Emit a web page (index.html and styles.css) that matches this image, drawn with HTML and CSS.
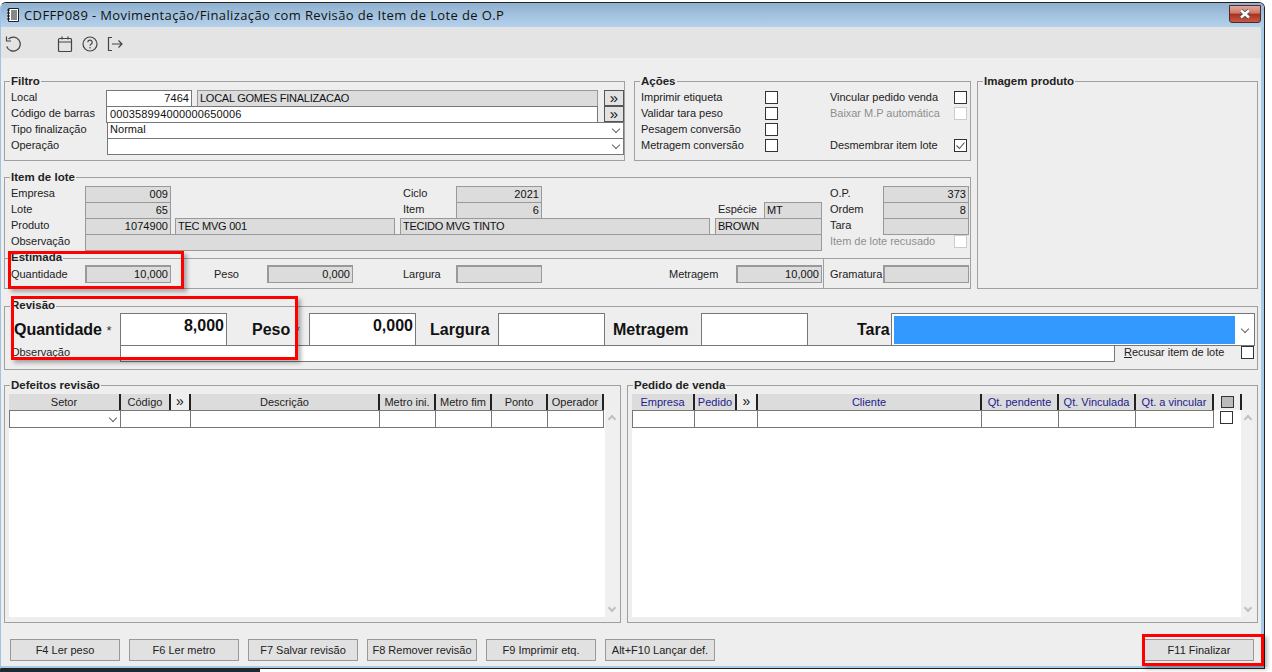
FILE: index.html
```html
<!DOCTYPE html>
<html lang="pt">
<head>
<meta charset="utf-8">
<title>CDFFP089</title>
<link rel="stylesheet" href="styles.css">
</head>
<body>
<div class="window">
  <header class="titlebar">
    <svg class="appicon" width="16" height="16" viewBox="0 0 16 16"><path d="M3.500 1.500h10v13h-10z" fill="#fff" stroke="#222"/><path d="M2 3h3M2 6h3M2 9h3M2 12h3" stroke="#111"/><path d="M6 4h6M6 6h6M6 8h6M6 10h6M6 12h6" stroke="#111"/></svg>
    <span class="titletext">CDFFP089 - Movimentação/Finalização com Revisão de Item de Lote de O.P</span>
    <span class="close"><svg width="14" height="10" viewBox="0 0 14 10"><path d="M3 1.500l8 7M11 1.500l-8 7" stroke="#45505a" stroke-width="4"/><path d="M3 1.500l8 7M11 1.500l-8 7" stroke="#fff" stroke-width="2.400"/></svg></span>
  </header>
  <nav class="toolbar">
    <svg class="tool" width="20" height="20" viewBox="0 0 20 20" fill="none" stroke="#444" stroke-width="1.200"><path d="M5.500 5a7 7 0 1 1-1.800 7.500"/><path d="M3.500 2.500v4.500h4.500"/></svg>
    <svg class="tool first" width="18" height="18" viewBox="0 0 18 18" fill="none" stroke="#444" stroke-width="1.200"><rect x="2.500" y="3.500" width="13" height="13" rx="1"/><path d="M2.500 7h13M6 1.500v3M12 1.500v3"/></svg>
    <svg class="tool" width="18" height="18" viewBox="0 0 18 18" fill="none" stroke="#444" stroke-width="1.200"><circle cx="9" cy="9" r="7"/><path d="M6.800 7.200a2.200 2.200 0 1 1 3.200 2c-.7.4-1 .8-1 1.600"/><path d="M9 12v1.500"/></svg>
    <svg class="tool" width="18" height="18" viewBox="0 0 18 18" fill="none" stroke="#444" stroke-width="1.200"><path d="M6 2.500H2.500v13H6M6 9h10M12.500 5.500L16 9l-3.500 3.500"/></svg>
  </nav>
  <main class="content">
    <div class="upper">
      <div class="upper-left">
        <div class="upper-row">
          <section class="panel filtro">
            <h2 class="legend">Filtro</h2>
            <div class="row"><label class="lab w95">Local</label><span class="f w86 num">7464</span><span class="f ro w401 ml5">LOCAL GOMES FINALIZACAO</span><span class="btn-more ml6">»</span></div>
            <div class="row"><label class="lab w95">Código de barras</label><span class="f w491 digits">000358994000000650006</span><span class="btn-more ml6">»</span></div>
            <div class="row"><label class="lab w96">Tipo finalização</label><span class="f combo w517">Normal<i class="chev"></i></span></div>
            <div class="row"><label class="lab w96">Operação</label><span class="f combo w517"><i class="chev"></i></span></div>
          </section>
          <section class="panel acoes">
            <h2 class="legend">Ações</h2>
            <div class="check-grid">
              <div class="row"><label class="lab w124">Imprimir etiqueta</label><span class="cb"></span><label class="lab w124 ml52">Vincular pedido venda</label><span class="cb"></span></div>
              <div class="row"><label class="lab w124">Validar tara peso</label><span class="cb"></span><label class="lab w124 ml52 dis">Baixar M.P automática</label><span class="cb off"></span></div>
              <div class="row"><label class="lab w124">Pesagem conversão</label><span class="cb"></span></div>
              <div class="row"><label class="lab w124">Metragem conversão</label><span class="cb"></span><label class="lab w124 ml52">Desmembrar item lote</label><span class="cb"><svg width="13" height="13" viewBox="0 0 13 13" fill="none" stroke="#555" stroke-width="1.100"><path d="M2.500 6.500l3 3 5-6"/></svg></span></div>
            </div>
          </section>
        </div>
        <section class="panel item">
          <h2 class="legend">Item de lote</h2>
          <div class="row"><label class="lab w74">Empresa</label><span class="f ro w86 num">009</span><label class="lab w53 ml232">Ciclo</label><span class="f ro w86 num">2021</span><label class="lab w53 ml288">O.P.</label><span class="f ro w86 num">373</span></div>
          <div class="row"><label class="lab w74">Lote</label><span class="f ro w86 num">65</span><label class="lab w53 ml232">Item</label><span class="f ro w86 num">6</span><label class="lab w46 ml176">Espécie</label><span class="f ro w58">MT</span><label class="lab w53 ml8">Ordem</label><span class="f ro w86 num">8</span></div>
          <div class="row"><label class="lab w74">Produto</label><span class="f ro w86 num">1074900</span><span class="f ro w220 ml4">TEC MVG 001</span><span class="f ro w310 ml5">TECIDO MVG TINTO</span><span class="f ro w107 ml5">BROWN</span><label class="lab w53 ml8">Tara</label><span class="f ro w86"></span></div>
          <div class="row"><label class="lab w74">Observação</label><span class="f ro w737"></span><label class="lab w124 ml8 dis">Item de lote recusado</label><span class="cb off"></span></div>
          <div class="estimada">
            <h2 class="legend">Estimada</h2>
            <div class="row"><label class="lab w74">Quantidade</label><span class="f ro w86 num">10,000</span><label class="lab w53 ml43">Peso</label><span class="f ro w86 num">0,000</span><label class="lab w53 ml50">Largura</label><span class="f ro w86"></span><label class="lab w67 ml127">Metragem</label><span class="f ro w86 num">10,000</span><label class="lab w53 ml8">Gramatura</label><span class="f ro w86"></span></div>
            <i class="vsep"></i>
          </div>
        </section>
      </div>
      <section class="panel imagem">
        <h2 class="legend">Imagem produto</h2>
      </section>
    </div>

    <section class="panel revisao">
      <h2 class="legend">Revisão</h2>
      <div class="rev-row">
        <label class="big w106">Quantidade <em>*</em></label><span class="f bigf w107">8,000</span>
        <label class="big w82 pl25">Peso <em>*</em></label><span class="f bigf w107">0,000</span>
        <label class="big w82 pl14">Largura</label><span class="f bigf w107"></span>
        <label class="big w96 pl8">Metragem</label><span class="f bigf w107"></span>
        <label class="big w83 pl49">Tara</label>
        <span class="f tara"><b class="blue"></b><i class="chev"></i></span>
      </div>
      <div class="row obs">
        <label class="lab w109">Observação</label><span class="f w995"></span>
        <label class="lab w117 ml9"><u>R</u>ecusar item de lote</label><span class="cb"></span>
      </div>
    </section>

    <div class="lower">
      <section class="panel defeitos">
        <h2 class="legend">Defeitos revisão</h2>
        <div class="gridbox">
          <div class="gridhead">
            <span class="th w112">Setor</span><span class="th w50">Código</span><span class="th w20 more">»</span><span class="th w189">Descrição</span><span class="th w56">Metro ini.</span><span class="th w56">Metro fim</span><span class="th w56">Ponto</span><span class="th w56">Operador</span>
          </div>
          <div class="gridrow">
            <span class="td w112"><i class="chev"></i></span><span class="td w70"></span><span class="td w189"></span><span class="td w56"></span><span class="td w56"></span><span class="td w56"></span><span class="td w56"></span>
          </div>
          <div class="scroll"><i class="sup"></i><i class="sdown"></i></div>
        </div>
      </section>
      <section class="panel pedido">
        <h2 class="legend">Pedido de venda</h2>
        <div class="gridbox">
          <div class="gridhead blue-h">
            <span class="th w63">Empresa</span><span class="th w42">Pedido</span><span class="th w21 more">»</span><span class="th w224">Cliente</span><span class="th w77">Qt. pendente</span><span class="th w77">Qt. Vinculada</span><span class="th w78">Qt. a vincular</span><span class="th w28 sel"><b class="selbox"></b></span>
          </div>
          <div class="gridrow">
            <span class="td w63"></span><span class="td w63"></span><span class="td w224"></span><span class="td w77"></span><span class="td w77"></span><span class="td w78"></span><span class="cb rowcb"></span>
          </div>
          <div class="scroll"><i class="sup"></i><i class="sdown"></i></div>
        </div>
      </section>
    </div>

    <footer class="actions">
      <button class="act">F4 Ler peso</button><button class="act">F6 Ler metro</button><button class="act">F7 Salvar revisão</button><button class="act">F8 Remover revisão</button><button class="act">F9 Imprimir etq.</button><button class="act">Alt+F10 Lançar def.</button>
      <button class="act final">F11 Finalizar</button>
    </footer>
  </main>
  <i class="mark m1"></i><i class="mark m2"></i><i class="mark m3"></i>
</div>
<i class="taskstrip"></i>
</body>
</html>
```
FILE: styles.css
```css
* { box-sizing: border-box; }
html, body { margin: 0; height: 672px; overflow: hidden; background: #fff; }
body { font: 11px "Liberation Sans", Arial, sans-serif; color: #111; position: relative; }
.window { position: relative; width: 1265px; height: 667px; margin-top: 2px; border: 1px solid #222; border-radius: 6px 6px 0 0; background: #eee; display: flex; flex-direction: column; border-left-color: #9fc3e0; }
.taskstrip { position: absolute; left: 0; top: 669px; width: 260px; height: 3px; background: #1e2a30; }
.titlebar { height: 24px; flex: none; display: flex; align-items: center; padding-left: 4px; background: linear-gradient(#8fb0cf, #b5d2ec); border-radius: 5px 5px 0 0; }
.appicon { margin-right: 3px; }
.titletext { font: 13px "Open Sans", "Noto Sans", sans-serif; color: #111; letter-spacing: 0.38px; }
.close { margin-left: auto; margin-right: 3px; margin-top: -3px; width: 32px; height: 18px; border: 1px solid #4a2a2a; border-radius: 0 0 3px 3px; display: flex; align-items: center; justify-content: center; background: linear-gradient(#e0a89c 0, #cf7766 45%, #a8301c 50%, #c85a44 100%); }
.toolbar { height: 31px; flex: none; background: #e4e4e4; display: flex; align-items: center; padding: 3px 0 0 2px; gap: 7px; border-right: 3px solid #a6cbe8; }
.tool.first { margin-left: 26px; }
.content { flex: 1; padding: 23px 0 0 3px; position: relative; border-right: 3px solid #a6cbe8; border-bottom: 2px solid #a6cbe8; background: #eee; }
.panel { position: relative; border: 1px solid #a0a0a0; padding: 8px 0 0 6px; }
.legend { position: absolute; left: 5px; top: -7px; margin: 0; padding: 0 1px; font-size: 11.5px; font-weight: 700; line-height: 13px; background: #eee; color: #222; }
.upper { display: flex; gap: 6px; height: 208px; }
.upper-left { width: 967px; display: flex; flex-direction: column; gap: 16px; }
.upper-row { display: flex; gap: 9px; height: 80px; }
.filtro { width: 621px; }
.acoes { width: 337px; }
.imagem { width: 281px; }
.item { height: 112px; }
.row { display: flex; height: 16px; align-items: stretch; }
.lab { display: block; line-height: 15px; white-space: nowrap; flex: none; font-size: 11px; letter-spacing: -0.03px; color: #222; }
.dis { color: #8e8e8e; }
.f { display: block; flex: none; height: 17px; border: 1px solid #777; background: #fff; padding: 0 3px; line-height: 14px; font-size: 11px; letter-spacing: 0.05px; white-space: nowrap; position: relative; overflow: hidden; color: #111; }
.digits { letter-spacing: 0.15px; }
.ro { background: #dcdcdc; border-color: #999; padding-left: 2px; letter-spacing: -0.25px; }
.num { text-align: right; padding-right: 2px; letter-spacing: 0.05px; }
.combo { padding-left: 2px; line-height: 13px; }
.chev { position: absolute; right: 4px; top: 3px; width: 6px; height: 6px; border: solid #666; border-width: 0 1px 1px 0; transform: rotate(45deg); }
.btn-more { flex: none; width: 20px; height: 16px; border: 1px solid #555; background: #e2e2e2; text-align: center; font: 400 15px/13px "Liberation Sans", sans-serif; color: #111; }
.cb { flex: none; display: block; width: 13px; height: 13px; border: 1px solid #333; background: #fff; margin-top: 1px; position: relative; }
.cb svg { display: block; margin: -1px; }
.cb.off { border-color: #ccc; }
.estimada { position: relative; margin: 8px -1px 0 -6px; border-top: 1px solid #a0a0a0; padding: 6px 0 0 6px; height: 31px; }
.estimada .lab { margin-top: 2px; }
.estimada .f { height: 18px; border-width: 2px 1px 1px 2px; line-height: 15px; }
.estimada .row { height: 18px; }
.estimada .legend { left: 5px; top: -8px; }
.vsep { position: absolute; left: 818px; top: 0; bottom: 0; width: 1px; background: #a0a0a0; }
.w46{width:46px}.w53{width:53px}.w58{width:58px}.w67{width:67px}.w74{width:74px}.w82{width:82px}.w83{width:83px}.w86{width:86px}.w95{width:95px}.w96{width:96px}.w106{width:106px}.w107{width:107px}.w109{width:109px}.w117{width:117px}.w124{width:124px}.w220{width:220px}.w310{width:310px}.w401{width:401px}.w491{width:492px}.w517{width:517px}.w737{width:737px}.w995{width:995px}
.w20{width:20px}.w21{width:21px}.w28{width:28px}.w42{width:42px}.w50{width:50px}.w56{width:56px}.w63{width:63px}.w70{width:70px}.w77{width:77px}.w78{width:78px}.w112{width:112px}.w189{width:189px}.w224{width:224px}
.ml4{margin-left:4px}.ml5{margin-left:5px}.ml6{margin-left:6px}.ml8{margin-left:8px}.ml9{margin-left:9px}.ml43{margin-left:43px}.ml50{margin-left:50px}.ml52{margin-left:52px}.ml127{margin-left:127px}.ml176{margin-left:176px}.ml232{margin-left:232px}.ml288{margin-left:288px}
.pl8{padding-left:8px}.pl14{padding-left:14px}.pl25{padding-left:25px}.pl49{padding-left:49px}
.revisao { margin-top: 17px; width: 1254px; height: 64px; padding: 6px 0 0 9px; }
.revisao > .legend { top: -8px; }
.rev-row { display: flex; height: 32px; }
.big { flex: none; font-size: 16px; font-weight: 700; line-height: 34px; color: #111; white-space: nowrap; }
.big em { font: 400 13px "Liberation Sans", sans-serif; color: #333; }
.bigf { height: 33px; font-size: 16px; font-weight: 700; text-align: right; padding: 1px 2px 0 0; line-height: 22px; letter-spacing: 0; }
.tara { flex: none; width: 364px; height: 33px; padding: 2px; }
.blue { display: block; width: 341px; height: 28px; background: #3399ff; }
.tara .chev { top: 12px; right: 6px; }
.obs { margin-left: -3px; }
.lower { display: flex; gap: 6px; margin-top: 15px; }
.panel.defeitos { width: 617px; height: 238px; padding: 8px 0 0 4px; }
.panel.pedido { width: 631px; height: 238px; padding: 8px 0 0 4px; }
.gridbox { position: relative; height: 223px; background: #fff; }
.defeitos .gridbox { width: 610px; }
.pedido .gridbox { width: 623px; }
.gridhead { display: flex; height: 16px; background: #eee; }
.th { flex: none; height: 16px; background: #dcdcdc; border-right: 2px solid #222; text-align: center; line-height: 16px; font-size: 11px; color: #222; white-space: nowrap; }
.blue-h .th { color: #22228c; }
.th.more { background: #eee; font: 400 14px/15px "Liberation Sans", sans-serif; color: #111; }
.th.sel { background: #eee; display: flex; align-items: center; justify-content: center; }
.selbox { display: block; width: 13px; height: 12px; background: #bbb; border: 1px solid #333; }
.gridrow { display: flex; height: 18px; }
.td { flex: none; position: relative; height: 18px; border: solid #777; border-width: 1px 1px 1px 0; background: #fff; }
.td .chev { top: 4px; }
.gridrow .td:first-child { border-left: 1px solid #777; }
.rowcb { margin: 1px 0 0 6px; }
.scroll { position: absolute; right: 0; top: 16px; bottom: 0; width: 14px; background: #f0f0f0; }
.sup, .sdown { position: absolute; left: 4px; width: 6px; height: 6px; border: solid #c0c0c0; border-width: 2px 0 0 2px; transform: rotate(45deg); }
.sup { top: 6px; }
.sdown { bottom: 6px; transform: rotate(225deg); }
.actions { display: flex; gap: 9px; margin-top: 16px; padding-left: 6px; }
.act { width: 110px; height: 22px; padding: 0; border: 1px solid #999; background: #e1e1e1; font: 11px "Liberation Sans", sans-serif; color: #222; white-space: nowrap; }
.final { margin-left: auto; margin-right: 7px; }
.mark { position: absolute; display: block; border: 3px solid #f00; box-shadow: 3px 3px 4px rgba(0,0,0,.3); }
.m1 { left: 7px; top: 248px; width: 176px; height: 38px; }
.m2 { left: 10px; top: 293px; width: 287px; height: 64px; }
.m3 { left: 1141px; top: 631px; width: 122px; height: 32px; }
```
